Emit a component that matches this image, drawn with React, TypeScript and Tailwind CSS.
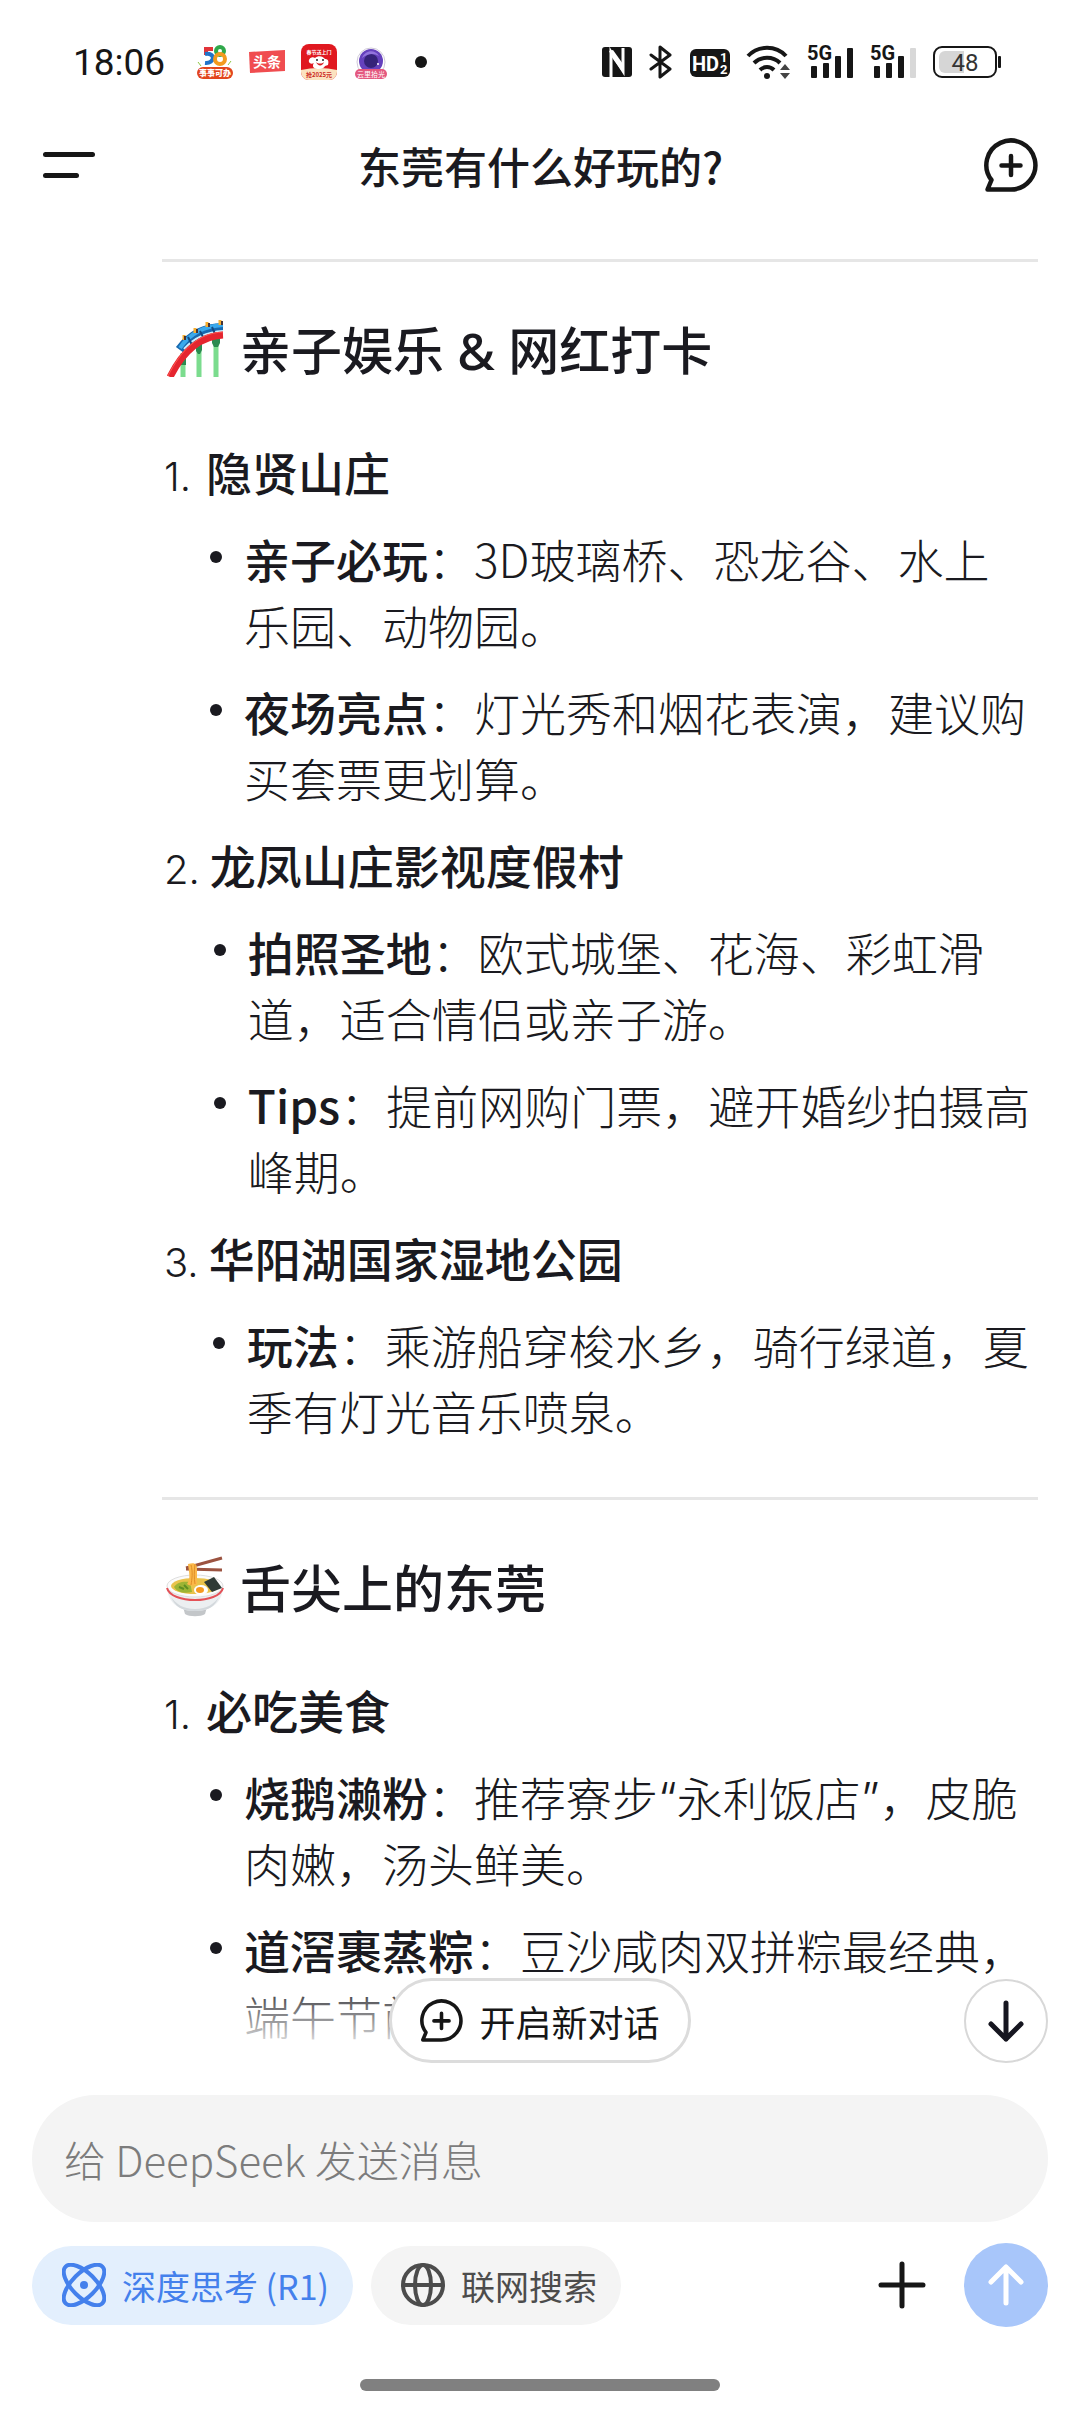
import type { ReactNode } from "react";

type Bullet = { label: string; text: ReactNode };
type Spot = { title: string; bullets: Bullet[] };

const funSpots: Spot[] = [
  {
    title: "隐贤山庄",
    bullets: [
      { label: "亲子必玩", text: "3D玻璃桥、恐龙谷、水上乐园、动物园。" },
      { label: "夜场亮点", text: "灯光秀和烟花表演，建议购买套票更划算。" },
    ],
  },
  {
    title: "龙凤山庄影视度假村",
    bullets: [
      { label: "拍照圣地", text: "欧式城堡、花海、彩虹滑道，适合情侣或亲子游。" },
      { label: "Tips", text: "提前网购门票，避开婚纱拍摄高峰期。" },
    ],
  },
  {
    title: "华阳湖国家湿地公园",
    bullets: [
      { label: "玩法", text: "乘游船穿梭水乡，骑行绿道，夏季有灯光音乐喷泉。" },
    ],
  },
];

const foodSpots: Spot[] = [
  {
    title: "必吃美食",
    bullets: [
      {
        label: "烧鹅濑粉",
        text: (
          <>
            推荐寮步<span className="font-['Inter'] leading-none">“</span>永利饭店
            <span className="font-['Inter'] leading-none">”</span>，皮脆肉嫩，汤头鲜美。
          </>
        ),
      },
      { label: "道滘裹蒸粽", text: "豆沙咸肉双拼粽最经典，端午节前" },
    ],
  },
];

function SignalIcon({ weak = false }: { weak?: boolean }) {
  return (
    <svg width="48" height="50" viewBox="0 -8 48 50" fill="#161616">
      <text x="0" y="15" fontSize="20" fontWeight="700" fontFamily="Roboto, sans-serif">
        5G
      </text>
      <rect x="4" y="21" width="6" height="12" rx="1" />
      <rect x="16" y="18" width="6" height="15" rx="1" />
      <rect x="28" y="11" width="6" height="22" rx="1" />
      <rect x="40" y="3" width="6" height="30" rx="1" fill={weak ? "#d8d8d8" : "#161616"} />
    </svg>
  );
}

function NotificationIcons() {
  return (
    <div className="flex items-center gap-4">
      {/* 58 */}
      <svg width="36" height="36" viewBox="0 0 36 36" fontFamily="Roboto, sans-serif" fontWeight="900">
        <g fill="none" strokeWidth="4">
          <path d="M16 5H9v6" stroke="#e2343a" />
          <path d="M8 10c11-2 10 10 0 9" stroke="#2173c9" />
          <circle cx="23" cy="7" r="4" stroke="#2fa84a" />
          <circle cx="23" cy="15" r="5" stroke="#f39a1e" />
        </g>
        <path d="M1 18l3 4M34 17l-3 4" stroke="#8cc63f" />
        <rect x="0" y="23" width="36" height="12" rx="6" fill="#e2451d" />
        <text x="18" y="32" fontSize="8" fill="#fff" textAnchor="middle" fontFamily="'Noto Sans CJK SC', sans-serif">
          事事可办
        </text>
      </svg>
      {/* Toutiao */}
      <svg width="36" height="36" viewBox="0 0 36 36">
        <path d="M0 8l36-2v21L1 29z" fill="#f04d50" />
        <text x="18" y="23" fontSize="14" fontWeight="700" fill="#fff" textAnchor="middle" fontFamily="'Noto Sans CJK SC', sans-serif">
          头条
        </text>
      </svg>
      {/* JD */}
      <svg width="36" height="36" viewBox="0 0 36 36" fontFamily="'Noto Sans CJK SC', sans-serif">
        <rect width="36" height="36" rx="8" fill="#e01820" />
        <path d="M0 26q18-4 36 0v2a8 8 0 0 1-8 8H8a8 8 0 0 1-8-8z" fill="#fbe3c0" />
        <text x="18" y="10" fontSize="5" fontWeight="700" fill="#fff" textAnchor="middle">
          春节送上门
        </text>
        <path d="M8 18c-1-3 3-6 6-4 3-3 8-2 10 1 3 0 4 2 3 6l-3 1c-1 4-12 4-12 0 0-1 0-2 1-3-2 1-4 1-5-1z" fill="#fff" />
        <path d="M15 18c2 2 6 2 8 0-1 4-6 5-8 0z" fill="#d81920" />
        <circle cx="16" cy="16" r="1" fill="#222" />
        <circle cx="22" cy="16" r="1" fill="#222" />
        <text x="18" y="33" fontSize="6" fontWeight="700" fill="#cc2a1e" textAnchor="middle">
          抢2025元
        </text>
      </svg>
      {/* Cloud camera */}
      <svg width="36" height="36" viewBox="0 0 36 36" fontFamily="'Noto Sans CJK SC', sans-serif">
        <circle cx="18" cy="18" r="14" fill="#fff" stroke="#cfc9d8" />
        <circle cx="18" cy="17" r="12" fill="#6541bd" />
        <circle cx="18" cy="17" r="7" fill="#352379" />
        <path d="M9 14c3-8 13-9 17-2-5-3-11-3-17 2z" fill="#9375dd" />
        <circle cx="25" cy="20" r="1" fill="#fff" />
        <rect x="2" y="25" width="32" height="10" rx="5" fill="#e4587f" />
        <text x="18" y="33" fontSize="7" fill="#fff" textAnchor="middle">
          云里拾光
        </text>
      </svg>
      <span className="ml-[10px] size-3 rounded-full bg-[#161616]" />
    </div>
  );
}

function StatusBar() {
  return (
    <div className="flex h-[124px] items-center justify-between pr-[79px] pl-[73px]">
      <div className="flex items-center gap-8">
        <span className="font-['Roboto'] text-[37px] leading-none text-[#161616]">18:06</span>
        <NotificationIcons />
      </div>
      <div className="flex items-center gap-[15px]">
        <svg width="31" height="32" viewBox="0 0 31 32">
          <rect x="0" y="1" width="30" height="30" rx="3" fill="#161616" />
          <path d="M9 31V6l12 19V2" fill="none" stroke="#fff" strokeWidth="3" />
          <path d="M7 5l4-1 10 14v7l-2-1-8-11z" fill="#fff" />
        </svg>
        <svg width="26" height="34" viewBox="0 0 26 34" fill="none" stroke="#161616" strokeWidth="3" strokeLinejoin="round" strokeLinecap="round">
          <path d="M3 10l19 14-10 8V2l10 8L3 24" />
        </svg>
        <svg width="42" height="34" viewBox="0 0 42 34" fontFamily="Roboto, sans-serif" fontWeight="700" fill="#fff">
          <rect x="1" y="4" width="40" height="28" rx="6" fill="#161616" />
          <text x="3" y="26" fontSize="20">HD</text>
          <text x="31" y="17" fontSize="13">1</text>
          <text x="31" y="29" fontSize="13">2</text>
        </svg>
        <svg width="46" height="36" viewBox="0 0 46 36" fill="none" stroke="#161616" strokeWidth="4">
          <path d="M2 12c10-11 28-11 38 0" />
          <path d="M8 19c7-7 19-7 26 0" />
          <path d="M14 26c4-4 10-4 14 0" />
          <circle cx="21" cy="32" r="3" fill="#161616" stroke="none" />
          <path d="M34 26l5-6 5 6zM34 29l5 6 5-6z" fill="#444" stroke="none" />
        </svg>
        <SignalIcon />
        <SignalIcon weak />
        <svg width="68" height="34" viewBox="0 0 68 34">
          <rect x="1" y="2" width="62" height="30" rx="8" fill="#fff" stroke="#161616" strokeWidth="2" />
          <path d="M12 6h19v22H12a6 6 0 0 1-6-6V12a6 6 0 0 1 6-6z" fill="#d6d6d6" />
          <rect x="65" y="11" width="3" height="12" rx="1" fill="#161616" />
          <text x="32" y="26" fontSize="24" fontFamily="Roboto, sans-serif" fill="#333" textAnchor="middle">
            48
          </text>
        </svg>
      </div>
    </div>
  );
}

function NewChatIcon({ className }: { className: string }) {
  return (
    <svg className={className} viewBox="0 0 54 54" fill="none" stroke="#161616" strokeLinecap="round" strokeLinejoin="round">
      <path d="M27 51.500H3.500l4-9.500A24.500 24.500 0 1 1 27 51.500z" strokeWidth="4.500" />
      <path d="M27 18v19M17.500 27.500h19" strokeWidth="4.500" />
    </svg>
  );
}

function CoasterEmoji() {
  return (
    <svg width="58" height="58" viewBox="0 0 58 58" fill="none">
      <g stroke="#7bdc8e" strokeWidth="5">
        <path d="M17 34v24M33 24v34M50 20v38" />
      </g>
      <path d="M15 42l5-8v12h-5zM30 28l6-4v7l-2 4h-2l-2-3zM46 20h8v4l-2 4h-4l-2-4z" fill="#2b8b50" />
      <path d="M14 31C24 17 38 9 57 9" stroke="#1769b0" strokeWidth="10" />
      <path d="M14 29C24 14 38 7 57 6" stroke="#3aa9ec" strokeWidth="4" />
      <path d="M18 30C27 20 39 13 57 12" stroke="#cdeeff" strokeWidth="2" />
      <path d="M22 18l4 8M34 12l4 8M46 8l3 7" stroke="#124a83" strokeWidth="2" />
      <path d="M18 21v-5M29 14V9M41 8V3M54 6V1" stroke="#f6ae2f" strokeWidth="3" />
      <path d="M19 21v-4M31 14v-4M43 8V4M56 6V2" stroke="#473437" strokeWidth="2" />
      <path d="M4 58C17 32 34 17 57 16" stroke="#e5252f" strokeWidth="7" />
      <path d="M2 57C15 31 32 14 57 13" stroke="#ff5750" strokeWidth="1" />
    </svg>
  );
}

function NoodlesEmoji() {
  return (
    <svg width="58" height="62" viewBox="0 0 58 62" fill="none">
      <path d="M17 52h24l-2 7c-4 3-16 3-20 0z" fill="#c3c6c9" />
      <path d="M1 31c0 14 9 25 28 25s28-11 28-25z" fill="#eceff1" />
      <path d="M5 42c5 7 12 12 24 12s19-5 24-12c-4 9-10 14-24 14S9 51 5 42z" fill="#d3d8dc" />
      <ellipse cx="29" cy="31" rx="28" ry="11" fill="#fbfbfb" stroke="#dedede" />
      <path d="M1 33c4 16 52 16 56 0" stroke="#e45157" strokeWidth="2" />
      <ellipse cx="29" cy="31" rx="24" ry="8" fill="#e9c34b" />
      <path d="M8 32c3-5 9-6 16-5l2 10c-8 2-15 0-18-5z" fill="#9db434" />
      <path d="M13 32l5 2M18 30l4 4" stroke="#5f8d22" strokeWidth="2" />
      <path d="M20 13L56 3M20 14l36 1" stroke="#9b5340" strokeWidth="3" />
      <path d="M22 9c7-2 9 0 9 5v15c-3 2-7 2-10 0 4-5 2-11 1-20z" fill="#fbb849" />
      <path d="M25 10c2 7 1 14 0 20M29 9c-1 8-1 14 0 20" stroke="#df8e27" />
      <path d="M38 27l10-5 8 11-10 4z" fill="#2f3b36" />
      <ellipse cx="35" cy="35" rx="7" ry="5" fill="#fff" />
      <ellipse cx="34" cy="35" rx="4" ry="3" fill="#f69a20" />
    </svg>
  );
}

function Section({ icon, title, spots }: { icon: ReactNode; title: ReactNode; spots: Spot[] }) {
  return (
    <section className="border-t-3 border-[#e6e6e6] pt-[50px]">
      <h2 className="flex items-center gap-4 pl-1 text-[51px] leading-[72px] font-medium">
        {icon}
        <span>{title}</span>
      </h2>
      <ol className="mt-[54px] flex flex-col gap-[21px] pr-[6px]">
        {spots.map((spot, i) => (
          <li key={spot.title} className="flex items-baseline gap-[10px]">
            <span className="min-w-[34px] pl-[2px] font-['Inter'] text-[40px] leading-[50px] font-light">
              {i + 1}.
            </span>
            <div className="flex flex-1 flex-col gap-[21px]">
              <h3 className="font-medium">{spot.title}</h3>
              <ul className="flex flex-col gap-[21px]">
                {spot.bullets.map((bullet) => (
                  <li key={bullet.label} className="flex">
                    <span className="mt-[26px] mr-[22px] ml-1 size-3 shrink-0 rounded-full bg-[#1a1a20]" />
                    <p>
                      <strong className="font-medium">{bullet.label}</strong>：{bullet.text}
                    </p>
                  </li>
                ))}
              </ul>
            </div>
          </li>
        ))}
      </ol>
    </section>
  );
}

export default function App() {
  return (
    <div
      lang="zh-CN"
      className="flex min-h-screen flex-col bg-white font-['Noto_Sans_CJK_SC',sans-serif] text-[#1a1a20]"
    >
      <StatusBar />

      <header className="flex h-[82px] items-center justify-between pr-[42px] pl-[43px]">
        <button type="button" aria-label="菜单" className="flex w-[54px] flex-col gap-4">
          <span className="h-[5px] w-[52px] rounded-full bg-[#161616]" />
          <span className="h-[5px] w-9 rounded-full bg-[#161616]" />
        </button>
        <h1 className="text-[43px] leading-[60px] font-medium">东莞有什么好玩的?</h1>
        <button type="button" aria-label="新对话">
          <NewChatIcon className="size-[54px]" />
        </button>
      </header>

      <main className="relative flex flex-1 flex-col gap-[54px] pt-[53px] pr-[42px] pb-2 pl-[162px] text-[46px] leading-[66px] font-light">
        <Section
          icon={<CoasterEmoji />}
          title={
            <>
              亲子娱乐<span className="font-['Noto_Sans'] leading-none"> & </span>网红打卡
            </>
          }
          spots={funSpots}
        />
        <Section icon={<NoodlesEmoji />} title="舌尖上的东莞" spots={foodSpots} />

        {/* Fade + floating actions over the end of the answer */}
        <div className="absolute inset-x-0 bottom-0 h-[84px] bg-linear-to-b from-white/0 to-white to-90%" />
        <div className="absolute inset-x-8 bottom-0 flex items-center justify-center">
          <button
            type="button"
            className="flex h-[85px] items-center gap-4 rounded-full border-3 border-[#dcdcdc] bg-white px-7 text-[36px] font-normal text-[#161616]"
          >
            <NewChatIcon className="size-[43px]" />
            开启新对话
          </button>
          <button
            type="button"
            aria-label="回到底部"
            className="absolute right-0 flex size-[84px] items-center justify-center rounded-full border-2 border-[#d8d8d8] bg-white"
          >
            <svg width="36" height="42" viewBox="0 0 36 42" fill="none" stroke="#161620" strokeWidth="5" strokeLinecap="round" strokeLinejoin="round">
              <path d="M18 3v36M3 24l15 15 15-15" />
            </svg>
          </button>
        </div>
      </main>

      <footer className="flex flex-col px-8 pt-8 pb-[21px]">
        <input
          type="text"
          aria-label="消息"
          placeholder="给 DeepSeek 发送消息"
          className="h-[127px] w-full rounded-full bg-[#f4f4f4] px-8 text-[42px] font-light outline-none placeholder:text-[#7c7c7c]"
        />
        <div className="mt-[21px] flex h-[84px] items-center">
          <button
            type="button"
            aria-pressed="true"
            className="flex h-[79px] items-center gap-4 rounded-full bg-[#e3effd] pr-6 pl-[30px] text-[34px] text-[#4480ec]"
          >
            <svg width="44" height="44" viewBox="0 0 44 44" fill="none" stroke="currentColor" strokeWidth="4">
              <ellipse cx="22" cy="22" rx="26" ry="12" transform="rotate(45 22 22)" />
              <ellipse cx="22" cy="22" rx="26" ry="12" transform="rotate(-45 22 22)" />
              <circle cx="22" cy="22" r="4" fill="currentColor" stroke="none" />
            </svg>
            深度思考 (R1)
          </button>
          <button
            type="button"
            aria-pressed="false"
            className="ml-[18px] flex h-[79px] items-center gap-4 rounded-full bg-[#f4f4f4] pr-6 pl-[30px] text-[34px] text-[#4c4c4c]"
          >
            <svg width="44" height="44" viewBox="0 0 44 44" fill="none" stroke="currentColor" strokeWidth="4">
              <circle cx="22" cy="22" r="20" />
              <ellipse cx="22" cy="22" rx="8" ry="20" />
              <path d="M2 22h40" />
            </svg>
            联网搜索
          </button>
          <button type="button" aria-label="添加附件" className="ml-auto">
            <svg width="48" height="48" viewBox="0 0 48 48" stroke="#161616" strokeWidth="5" strokeLinecap="round">
              <path d="M24 3v42M3 24h42" />
            </svg>
          </button>
          <button
            type="button"
            aria-label="发送"
            className="ml-[38px] flex size-[84px] items-center justify-center rounded-full bg-[#a8c6fa]"
          >
            <svg width="36" height="42" viewBox="0 0 36 42" fill="none" stroke="#fff" strokeWidth="5" strokeLinecap="round" strokeLinejoin="round">
              <path d="M18 39V3M3 18L18 3l15 15" />
            </svg>
          </button>
        </div>
        <div className="mt-[52px] h-3 w-[360px] self-center rounded-full bg-[#808080]" />
      </footer>
    </div>
  );
}
